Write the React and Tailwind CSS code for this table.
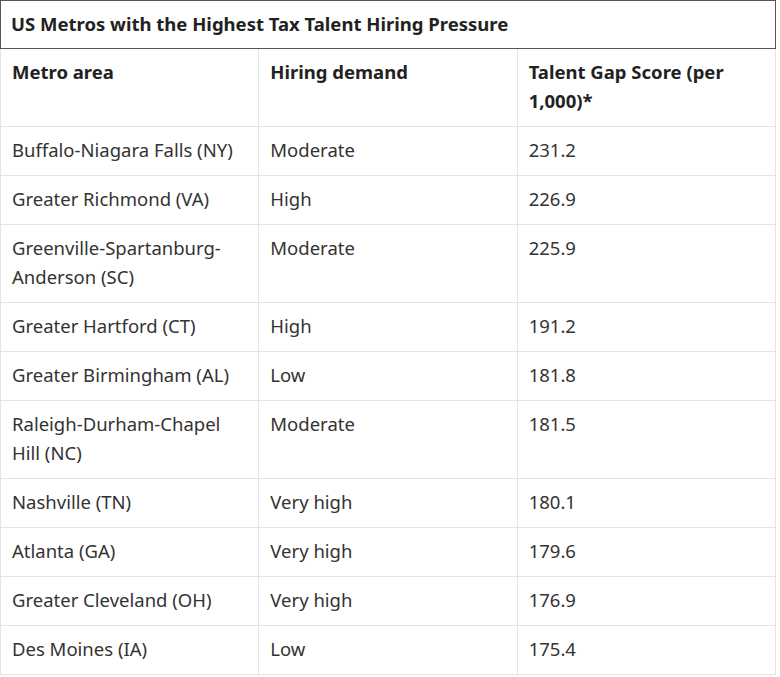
import React from "react";

const rows = [
  ["Buffalo-Niagara Falls (NY)", "Moderate", "231.2"],
  ["Greater Richmond (VA)", "High", "226.9"],
  ["Greenville-Spartanburg-Anderson (SC)", "Moderate", "225.9"],
  ["Greater Hartford (CT)", "High", "191.2"],
  ["Greater Birmingham (AL)", "Low", "181.8"],
  ["Raleigh-Durham-Chapel Hill (NC)", "Moderate", "181.5"],
  ["Nashville (TN)", "Very high", "180.1"],
  ["Atlanta (GA)", "Very high", "179.6"],
  ["Greater Cleveland (OH)", "Very high", "176.9"],
  ["Des Moines (IA)", "Low", "175.4"],
];

const cell = "border border-[#e4e4e4] px-[11px] pt-[8px] pb-[11px] align-top text-left";

export default function App() {
  return (
    <div className="w-[776px] bg-white font-['Noto_Sans',sans-serif] text-[18.5px] leading-[29px] text-[#333]">
      <div className="h-[49px] border-[1.5px] border-[#555] px-[10px] pb-[2px] flex items-center font-bold text-[#222]">
        US Metros with the Highest Tax Talent Hiring Pressure
      </div>
      <table className="w-[776px] table-fixed border-collapse">
        <thead>
          <tr>
            <th className={`${cell} border-t-0 font-bold text-[#222]`}>Metro area</th>
            <th className={`${cell} border-t-0 font-bold text-[#222]`}>Hiring demand</th>
            <th className={`${cell} border-t-0 font-bold text-[#222]`}>Talent Gap Score (per 1,000)*</th>
          </tr>
        </thead>
        <tbody>
          {rows.map((r) => (
            <tr key={r[0]}>
              {r.map((v, i) => (
                <td key={i} className={cell}>{v}</td>
              ))}
            </tr>
          ))}
        </tbody>
      </table>
    </div>
  );
}
